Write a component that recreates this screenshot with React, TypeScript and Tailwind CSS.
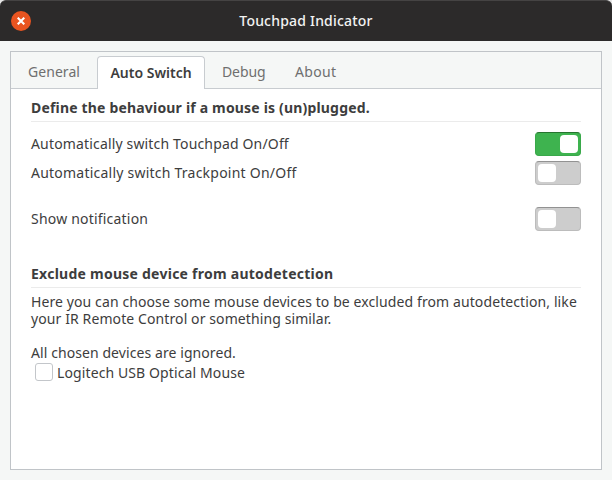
import type { ReactNode } from 'react';

const tabs = [
  { label: 'General', className: 'ml-[17px] w-[52px] tracking-[0.05px]' },
  { label: 'Debug', className: 'ml-[17px] w-[44px] tracking-[-0.1px]' },
  { label: 'About', className: 'ml-[29px] w-[42px] tracking-[0.3px]' },
];

function Tab({ label, className }: { label: string; className: string }) {
  return <button className={`mt-1 h-[31px] text-left text-[#6f6f6f] ${className}`}>{label}</button>;
}

function Toggle({ on = false }: { on?: boolean }) {
  return (
    <span
      role="switch"
      aria-checked={on}
      className={`flex h-6 w-[46px] items-center rounded-[4px] border ${
        on
          ? 'justify-end border-[#39a84a] border-t-[#26742f] bg-[#3eb34f] pr-[2px]'
          : 'justify-start border-[#bcbcbc] border-t-[#929292] bg-[#cdcdcd] pl-[2px]'
      }`}
    >
      <span className="h-[18px] w-[18px] rounded-[4px] bg-white" />
    </span>
  );
}

function Row({ children, className, on }: { children: ReactNode; className: string; on?: boolean }) {
  return (
    <div className="flex h-6 items-center justify-between">
      <span className={`pb-[2px] ${className}`}>{children}</span>
      <Toggle on={on} />
    </div>
  );
}

export default function App() {
  return (
    <div className="h-[480px] w-[612px] overflow-hidden bg-[#e6e6e6] font-['Noto_Sans',sans-serif] text-[14px] leading-[17px] whitespace-nowrap text-[#3d3d3d]">
      <div className="flex h-full flex-col rounded-t-[6px] bg-[#f5f7f6]">
        <header className="grid h-[41px] grid-cols-[1fr_auto_1fr] items-center rounded-t-[6px] border-t border-[#454343] bg-[#2c2a2a] px-[11px]">
          <button aria-label="Close" className="flex h-5 w-5 items-center justify-center rounded-full bg-[#e95420]">
            <svg width="8" height="8" viewBox="0 0 8 8" stroke="white" strokeWidth="2.1">
              <path d="M0.7 0.7 7.3 7.3M7.3 0.7 0.7 7.3" />
            </svg>
          </button>
          <h1 className="pb-[2px] text-[14px] font-medium tracking-[0.2px] text-[#f2f2f2]">Touchpad Indicator</h1>
        </header>

        <main className="mx-[10px] mt-[10px] mb-[10px] flex flex-1 flex-col border border-[#c0c4c8] bg-white">
          <nav className="flex h-[37px] shrink-0 border-b border-[#c8ccd0] bg-[#f5f7f6]">
            <Tab {...tabs[0]} />
            <button className="mt-1 ml-[17px] h-[33px] w-[108px] rounded-t-[4px] border border-b-0 border-[#c8ccd0] bg-white pb-[2px] text-center font-semibold">
              Auto Switch
            </button>
            <Tab {...tabs[1]} />
            <Tab {...tabs[2]} />
          </nav>

          <div className="flex flex-col px-5">
            <h2 className="mt-[10px] flex h-[23px] border-b border-[#ebebeb] font-bold tracking-[0.18px]">
              Define the behaviour if a mouse is (un)plugged.
            </h2>
            <div className="mt-[10px] flex flex-col gap-[5px]">
              <Row on className="tracking-[0.16px]">Automatically switch Touchpad On/Off</Row>
              <Row className="tracking-[0.23px]">Automatically switch Trackpoint On/Off</Row>
            </div>
            <div className="mt-[22px]">
              <Row className="tracking-[0.2px]">Show notification</Row>
            </div>

            <h2 className="mt-[34px] flex h-[23px] border-b border-[#ebebeb] font-bold tracking-[0.25px]">
              Exclude mouse device from autodetection
            </h2>
            <p className="mt-[5px] tracking-[0.1px]">
              Here you can choose some mouse devices to be excluded from autodetection, like
              <br />
              your IR Remote Control or something similar.
            </p>
            <p className="mt-[17px] tracking-[0.08px]">All chosen devices are ignored.</p>
            <label className="mt-[2px] ml-1 flex h-[18px] items-center gap-1">
              <span className="h-[18px] w-[18px] rounded-[3px] border border-[#c3c6ca] bg-white" />
              <span className="tracking-[0.11px]">Logitech USB Optical Mouse</span>
            </label>
          </div>
        </main>
      </div>
    </div>
  );
}
